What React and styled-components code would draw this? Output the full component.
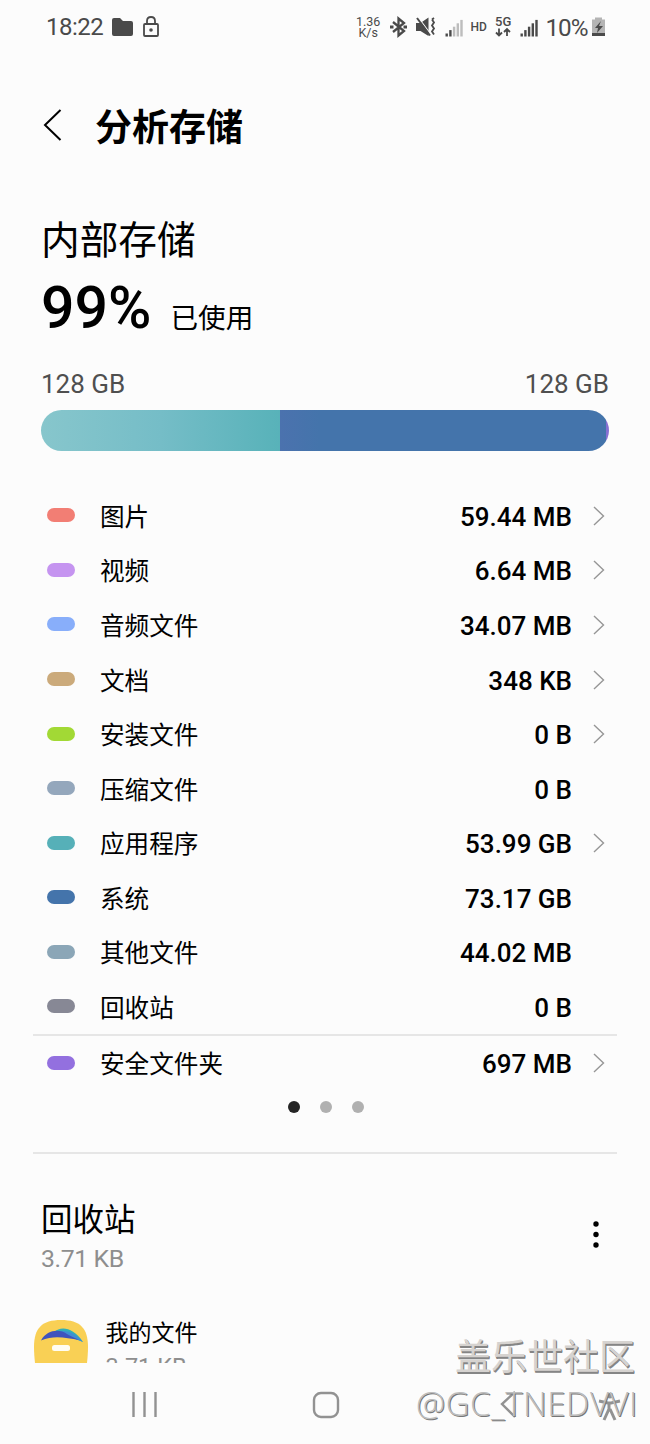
import React from "react";
import styled, { createGlobalStyle } from "styled-components";

const Global = createGlobalStyle`
  * { box-sizing: border-box; }
  body { margin: 0; background: #fcfcfc; }
`;

const Screen = styled.div`
  width: 650px;
  height: 1444px;
  position: relative;
  overflow: hidden;
  display: flex;
  flex-direction: column;
  background: #fcfcfc;
  color: #000;
  font-family: Roboto, "Noto Sans CJK SC", sans-serif;
`;

const StatusBar = styled.header`
  height: 54px;
  padding: 0 45px 0 46px;
  display: flex;
  align-items: center;
  justify-content: space-between;
  color: #4a4a4a;
`;
const StatusLeft = styled.div`
  display: flex;
  align-items: center;
`;
const Clock = styled.span`
  width: 66px;
  font-size: 24px;
  line-height: 28px;
  letter-spacing: -0.5px;
`;
const StatusIcons = styled.svg`
  display: block;
  width: 260px;
  height: 54px;
  flex: none;
  margin-right: -5px;
  text { font-family: Roboto, sans-serif; fill: #4a4a4a; }
`;

const TitleBar = styled.div`
  height: 146px;
  padding: 0 42px;
  display: flex;
  align-items: center;
`;
const BackIcon = styled.svg`
  width: 20px;
  height: 34px;
  margin: 0 33px 3px 0;
`;
const Title = styled.h1`
  margin: 4px 0 0;
  font-size: 37px;
  line-height: 54px;
  font-weight: 700;
`;

const Summary = styled.section`
  padding: 15px 41px 0;
  display: flex;
  flex-direction: column;
`;
const StorageName = styled.h2`
  margin: 0;
  font-size: 38.7px;
  line-height: 52px;
  font-weight: 400;
`;
const Usage = styled.div`
  height: 76px;
  display: flex;
  align-items: baseline;
  gap: 19px;
`;
const Percent = styled.span`
  font-size: 59px;
  line-height: 82px;
  font-weight: 500;
`;
const Used = styled.span`
  font-size: 27.6px;
`;
const Capacities = styled.div`
  margin-top: 25px;
  display: flex;
  justify-content: space-between;
  font-size: 26px;
  line-height: 32px;
  color: #4f4f4f;
`;
const UsageBar = styled.div`
  height: 41px;
  margin: 10px 0 0 -0.5px;
  border-radius: 21px;
  overflow: hidden;
  display: flex;
`;
const Segment = styled.div`
  flex: ${(p) => p.$size};
  background: ${(p) => p.$fill};
`;

const List = styled.ul`
  list-style: none;
  margin: 38px 33px 0;
  padding: 0;
`;
const Row = styled.li`
  height: ${(p) => (p.$divided ? 56.5 : 54.55)}px;
  padding: 0 12px 0 14px;
  display: flex;
  align-items: center;
  border-top: ${(p) => (p.$divided ? "2px solid #e6e6e6" : "0")};
`;
const Swatch = styled.span`
  width: 28px;
  height: 14px;
  margin: 0 25px 1px 0;
  border-radius: 7px;
  background: ${(p) => p.$color};
`;
const Label = styled.span`
  flex: 1;
  margin-top: 4px;
  font-size: 24.6px;
  line-height: 36px;
`;
const Size = styled.span`
  margin-top: 2px;
  font-size: 26px;
  line-height: 36px;
  font-weight: 500;
`;
const ChevronSlot = styled.span`
  width: 33px;
  display: flex;
  justify-content: flex-end;
`;

const Pager = styled.div`
  height: 64px;
  margin: 0 33px;
  padding: 10px 0 0 1px;
  display: flex;
  justify-content: center;
  gap: 20px;
  border-bottom: 2px solid #e6e6e6;
`;
const Dot = styled.span`
  width: 12px;
  height: 12px;
  border-radius: 50%;
  background: ${(p) => (p.$active ? "#252525" : "#b0b0b0")};
`;

const Bin = styled.section`
  height: 209px;
  overflow: hidden;
  padding: 44px 41px 0;
`;
const BinHeader = styled.div`
  height: 92px;
  display: flex;
  justify-content: space-between;
`;
const BinTitle = styled.h3`
  margin: 0;
  font-size: 31.5px;
  line-height: 46px;
  font-weight: 400;
`;
const BinSize = styled.div`
  font-size: 24.8px;
  line-height: 30px;
  letter-spacing: -0.4px;
  color: #8e8e8e;
`;
const MoreIcon = styled.svg`
  width: 8px;
  height: 30px;
  margin: 22px 9px 0 0;
`;
const FileItem = styled.div`
  margin: 30px 0 0 -7px;
  display: flex;
  gap: 17.5px;
`;
const FileName = styled.div`
  margin-top: 1px;
  font-size: 23px;
  line-height: 26px;
`;
const FileSize = styled.div`
  margin-top: 6px;
  font-size: 23.5px;
  line-height: 28px;
  color: #8e8e8e;
`;

const NavBar = styled.nav`
  flex: 1;
  display: flex;
`;

const Watermark = styled.div`
  position: absolute;
  right: 12px;
  top: 1330px;
  display: flex;
  flex-direction: column;
  align-items: flex-end;
  color: #d6d3d0;
  white-space: nowrap;
`;
const Community = styled.span`
  margin-right: 3px;
  font-family: "Noto Sans CJK SC", sans-serif;
  font-size: 36px;
  line-height: 48px;
  text-shadow: 1px 1px 0 #858585, 1px 2px 0 #858585;
`;
const Author = styled.span`
  font-family: "Open Sans", "Noto Sans", sans-serif;
  font-size: 32.9px;
  line-height: 52px;
  font-weight: 300;
  letter-spacing: 0.6px;
  color: #bdbdbd;
  text-shadow: 1px 1px 0 #777;
`;

const categories = [
  ["图片", "59.44 MB", "#f27e74", true],
  ["视频", "6.64 MB", "#c594f0", true],
  ["音频文件", "34.07 MB", "#88aefa", true],
  ["文档", "348 KB", "#cbaa7b", true],
  ["安装文件", "0 B", "#a2d935", true],
  ["压缩文件", "0 B", "#94a7bc", false],
  ["应用程序", "53.99 GB", "#56b0b8", true],
  ["系统", "73.17 GB", "#4474ab", false],
  ["其他文件", "44.02 MB", "#8ba6b7", false],
  ["回收站", "0 B", "#878895", false],
  ["安全文件夹", "697 MB", "#9370df", true],
];

function Chevron() {
  return (
    <svg width="12" height="20" viewBox="0 0 12 20" fill="none" stroke="#969696" strokeWidth="1.4">
      <path d="M1 1L10.5 10L1 19" />
    </svg>
  );
}

function SystemIcons() {
  const bars = (x, filled) =>
    [0, 1, 2, 3, 4].map((i) => (
      <rect
        key={i}
        x={x + i * 3.7}
        y={33.5 - i * 3.4}
        width="2.4"
        height={3 + i * 3.4}
        fill={i < filled ? "#4a4a4a" : "#bdbdbd"}
      />
    ));
  return (
    <StatusIcons viewBox="350 0 260 54">
      <text x="356" y="25.5" fontSize="12.5">1.36</text>
      <text x="358.5" y="37" fontSize="12.5">K/s</text>
      <g fill="none" stroke="#4a4a4a" strokeWidth="2.3">
        <path d="M393 22L404 31L398.5 35.500V18.500L404 23L393 32" />
      </g>
      <path d="M390 27h3.500M403.500 27h3.500" stroke="#4a4a4a" strokeWidth="2.800" />
      <path d="M416 23h4.500L428.500 17.500V36L420.500 31H416z" fill="#4a4a4a" />
      <path d="M418 17L431 34.500" stroke="#fcfcfc" strokeWidth="1.200" />
      <path d="M417 18L430 35.500" stroke="#4a4a4a" strokeWidth="2" />
      <path d="M432 19.500l2-1.500M432 19.500l2 3l-2 3l2 3l-2 3l2 3" fill="none" stroke="#4a4a4a" strokeWidth="1.800" />
      {bars(445.5, 2)}
      <text x="470.5" y="31" fontSize="12" fontWeight="500">HD</text>
      <text x="495" y="26" fontSize="13" fontWeight="500">5G</text>
      <path d="M499 28.500v7M496 32.500l3 3l3-3M507 36v-7M504 32l3-3l3 3" fill="none" stroke="#4a4a4a" strokeWidth="1.800" />
      {bars(520.5, 5)}
      <text x="545.5" y="35.500" fontSize="24.3" textLength="43">10%</text>
      <path d="M595 17.500h7v2h3V36h-13V19.500h3z" fill="#b4b4b4" />
      <path d="M592 33h13v3h-13z" fill="#4a4a4a" />
      <path d="M601 21l-6 7h3l-1 5l6-7h-4z" fill="#4a4a4a" />
    </StatusIcons>
  );
}

function FilesIcon() {
  return (
    <svg width="54" height="54" viewBox="0 0 54 54">
      <path d="M0 27C0 8 8 0 27 0S54 8 54 27C54 33 53.500 38 53 43H1C0.500 38 0 33 0 27z" fill="#f9d055" />
      <path d="M20 12C27 6 39 7 49 22C39 18 30 14 20 12z" fill="#32afb6" />
      <path d="M23 12C34 9 42 14 49 22C39 18 32 16 23 12z" fill="#408ed3" />
      <path d="M7 20.500C13 10 25 8.500 33 14C38 17 42 18 45 20C32 18 20 15 7 20.500z" fill="#4054bd" />
      <rect x="18" y="25" width="18" height="6" rx="2.500" fill="#fffdf4" />
    </svg>
  );
}

export default function App() {
  return (
    <Screen>
      <Global />
      <StatusBar>
        <StatusLeft>
          <Clock>18:22</Clock>
          <svg width="50" height="24" viewBox="0 0 50 24">
            <path d="M0 5q0-2 2-2h6l3 3h8q2 0 2 2v11q0 2-2 2H2q-2 0-2-2z" fill="#4a4a4a" />
            <g fill="none" stroke="#4a4a4a" strokeWidth="1.800">
              <rect x="32" y="9" width="14" height="12" rx="1" />
              <path d="M35 9V6q0-4 4-4t4 4v3" />
            </g>
            <circle cx="39" cy="15" r="1.800" fill="#4a4a4a" />
          </svg>
        </StatusLeft>
        <SystemIcons />
      </StatusBar>

      <TitleBar>
        <BackIcon viewBox="0 0 20 34" fill="none" stroke="#000" strokeWidth="2">
          <path d="M18.500 2L3 17L18.500 32" />
        </BackIcon>
        <Title>分析存储</Title>
      </TitleBar>

      <Summary>
        <StorageName>内部存储</StorageName>
        <Usage>
          <Percent>99%</Percent>
          <Used>已使用</Used>
        </Usage>
        <Capacities>
          <span>128 GB</span>
          <span>128 GB</span>
        </Capacities>
        <UsageBar>
          <Segment $size={240} $fill="linear-gradient(90deg, #87c6cc, #75bdc7 50%, #58b2b9)" />
          <Segment $size={325.500} $fill="linear-gradient(90deg, #4b72ae, #4474ab 12%)" />
          <Segment $size={3.500} $fill="#8670d2" />
        </UsageBar>
      </Summary>

      <List>
        {categories.map(([name, size, color, opens], i) => (
          <Row key={name} $divided={i === categories.length - 1}>
            <Swatch $color={color} />
            <Label>{name}</Label>
            <Size>{size}</Size>
            <ChevronSlot>{opens && <Chevron />}</ChevronSlot>
          </Row>
        ))}
      </List>

      <Pager>
        <Dot $active />
        <Dot />
        <Dot />
      </Pager>

      <Bin>
        <BinHeader>
          <div>
            <BinTitle>回收站</BinTitle>
            <BinSize>3.71 KB</BinSize>
          </div>
          <MoreIcon viewBox="0 0 8 30">
            <circle cx="4" cy="4" r="2.700" />
            <circle cx="4" cy="14.500" r="2.700" />
            <circle cx="4" cy="25" r="2.700" />
          </MoreIcon>
        </BinHeader>
        <FileItem>
          <FilesIcon />
          <div>
            <FileName>我的文件</FileName>
            <FileSize>3.71 KB</FileSize>
          </div>
        </FileItem>
      </Bin>

      <NavBar>
        <svg width="650" height="81" viewBox="0 1363 650 81" fill="none" stroke="#929292" strokeWidth="2.400">
          <path d="M133.500 1392v25M144.500 1392v25M155.500 1392v25" />
          <rect x="314" y="1393" width="24" height="24" rx="7" />
          <path d="M515 1392L502 1404L515 1417" />
          <path d="M599 1401l9 2h3l9-2M609 1403v6l-5 11M610 1409l5 11" strokeWidth="3" />
          <circle cx="610" cy="1396" r="2.500" fill="#929292" stroke="none" />
        </svg>
      </NavBar>

      <Watermark>
        <Community>盖乐世社区</Community>
        <Author>@GC_TNEDVVI</Author>
      </Watermark>
    </Screen>
  );
}
